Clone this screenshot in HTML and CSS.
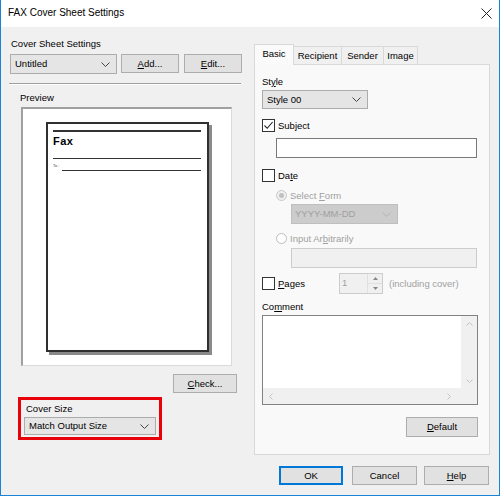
FILE: index.html
```html
<!DOCTYPE html>
<html>
<head>
<meta charset="utf-8">
<link rel="stylesheet" href="styles.css">
</head>
<body>
<div class="window">
  <div class="titlebar">
    <span class="title">FAX Cover Sheet Settings</span>
    <svg class="close" width="11" height="11" viewBox="0 0 11 11"><path d="M0.5 0.5L10.5 10.5M10.5 0.5L0.5 10.5" stroke="#222" stroke-width="1"/></svg>
  </div>
  <div class="body">
    <div class="left">
      <div class="lbl lbl-css">Cover Sheet Settings</div>
      <div class="row1">
        <div class="select sel-untitled"><span>Untitled</span><svg class="chev" width="9" height="5" viewBox="0 0 9 5"><path d="M0.5 0.5L4.5 4.5L8.5 0.5" fill="none" stroke="#444"/></svg></div>
        <div class="btn btn-add"><u>A</u>dd...</div>
        <div class="btn btn-edit"><u>E</u>dit...</div>
      </div>
      <div class="sep"></div>
      <div class="lbl lbl-preview">Preview</div>
      <div class="preview">
        <div class="page">
          <div class="pline pl1"></div>
          <div class="fax">Fax</div>
          <div class="pline pl2"></div>
          <div class="torow"><span class="to">To :</span><div class="pline pl3"></div></div>
        </div>
      </div>
      <div class="btn btn-check"><u>C</u>heck...</div>
      <div class="redbox">
        <div class="lbl lbl-cs">Cover Size</div>
        <div class="select sel-size"><span>Match Output Size</span><svg class="chev" width="9" height="5" viewBox="0 0 9 5"><path d="M0.5 0.5L4.5 4.5L8.5 0.5" fill="none" stroke="#444"/></svg></div>
      </div>
    </div>
    <div class="right">
      <div class="tabs">
        <div class="tab sel t1">Basic</div>
        <div class="tab t2">Recipient</div>
        <div class="tab t3">Sender</div>
        <div class="tab t4">Image</div>
      </div>
      <div class="panel">
        <div class="lbl lbl-style">St<u>y</u>le</div>
        <div class="select sel-style"><span>Style 00</span><svg class="chev" width="9" height="5" viewBox="0 0 9 5"><path d="M0.5 0.5L4.5 4.5L8.5 0.5" fill="none" stroke="#444"/></svg></div>
        <div class="chkrow row-subject">
          <span class="chk"><svg width="11" height="11" viewBox="0 0 11 11"><path d="M1.5 5.5L4.2 8.3L9.6 2" fill="none" stroke="#222" stroke-width="1.1"/></svg></span>
          <span>Sub<u>j</u>ect</span>
        </div>
        <div class="input in-subject"></div>
        <div class="chkrow row-date">
          <span class="chk"></span>
          <span>Da<u>t</u>e</span>
        </div>
        <div class="radrow row-form dis">
          <span class="radio on"><span class="dot"></span></span>
          <span>Select <u>F</u>orm</span>
        </div>
        <div class="select sel-date dsel"><span>YYYY-MM-DD</span><svg class="chev" width="9" height="5" viewBox="0 0 9 5"><path d="M0.5 0.5L4.5 4.5L8.5 0.5" fill="none" stroke="#b4b4b4"/></svg></div>
        <div class="radrow row-arb dis">
          <span class="radio"></span>
          <span>Input Ar<u>b</u>itrarily</span>
        </div>
        <div class="input in-arb"></div>
        <div class="pagesrow">
          <div class="chkrow row-pages">
            <span class="chk"></span>
            <span><u>P</u>ages</span>
          </div>
          <div class="spin">
            <span class="spinval">1</span>
            <span class="spinbtns">
              <span class="sb"><svg width="5" height="3" viewBox="0 0 5 3"><path d="M0 3L2.5 0L5 3Z" fill="#888"/></svg></span>
              <span class="sb"><svg width="5" height="3" viewBox="0 0 5 3"><path d="M0 0L2.5 3L5 0Z" fill="#888"/></svg></span>
            </span>
          </div>
          <span class="incl">(including cover)</span>
        </div>
        <div class="lbl lbl-comment">Co<u>m</u>ment</div>
        <div class="textarea">
          <div class="ta-main">
            <div class="ta-text"></div>
            <div class="vscroll">
              <svg width="7" height="4" viewBox="0 0 7 4"><path d="M0.5 3.5L3.5 0.5L6.5 3.5" fill="none" stroke="#c4c4c4"/></svg>
              <svg width="7" height="4" viewBox="0 0 7 4"><path d="M0.5 0.5L3.5 3.5L6.5 0.5" fill="none" stroke="#c4c4c4"/></svg>
            </div>
          </div>
          <div class="hscroll">
            <svg width="4" height="7" viewBox="0 0 4 7"><path d="M3.5 0.5L0.5 3.5L3.5 6.5" fill="none" stroke="#c4c4c4"/></svg>
            <svg width="4" height="7" viewBox="0 0 4 7"><path d="M0.5 0.5L3.5 3.5L0.5 6.5" fill="none" stroke="#c4c4c4"/></svg>
            <span class="corner"></span>
          </div>
        </div>
        <div class="defrow"><div class="btn btn-default"><u>D</u>efault</div></div>
      </div>
      <div class="bottom">
        <div class="btn btn-ok">OK</div>
        <div class="btn btn-cancel">Cancel</div>
        <div class="btn btn-help"><u>H</u>elp</div>
      </div>
    </div>
  </div>
</div>
</body>
</html>
```
FILE: styles.css
```css
* { box-sizing: border-box; }
html, body { margin: 0; padding: 0; }
body {
  font-family: "Liberation Sans", Arial, sans-serif;
  font-size: 9.5px;
  line-height: 12px;
  color: #000;
  background: #f0f0f0;
}
u { text-decoration: underline; text-underline-offset: 1px; }
.window {
  width: 500px;
  height: 496px;
  border: 1px solid #1883d7;
  border-top: none;
  background: #f0f0f0;
  display: flex;
  flex-direction: column;
}
.titlebar {
  height: 27px;
  background: #fff;
  display: flex;
  align-items: center;
  justify-content: space-between;
  padding: 0 8px 1px 7px;
}
.title { font-size: 10px; color: #000; }
.close { margin-right: -1px; }
.body { flex: 1; display: flex; }
.left { width: 252px; padding: 11px 0 0 9px; display: flex; flex-direction: column; }
.right { flex: 1; padding: 17px 0 0 1px; display: flex; flex-direction: column; }
.lbl { line-height: 12px; height: 12px; flex: none; }
.lbl-css { padding-left: 1px; }
.row1 { display: flex; margin-top: 4px; }
.select {
  display: flex;
  align-items: center;
  justify-content: space-between;
  background: #e5e5e5;
  border: 1px solid #acacac;
  padding: 0 6px 0 4px;
  height: 20px;
  flex: none;
}
.sel-untitled { width: 107px; }
.btn {
  display: flex;
  align-items: center;
  justify-content: center;
  background: #e1e1e1;
  border: 1px solid #adadad;
  height: 19px;
  flex: none;
}
.btn-add { width: 58px; margin-left: 4px; }
.btn-edit { width: 58px; margin-left: 5px; }
.sep {
  margin-top: 9px;
  margin-left: -1px;
  width: 232px;
  border-top: 1px solid #a0a0a0;
  border-bottom: 1px solid #fff;
}
.lbl-preview { margin-top: 7px; padding-left: 10px; }
.preview {
  margin-top: 3px;
  margin-left: 11px;
  width: 211px;
  height: 259px;
  flex: none;
  background: #fff;
  border-top: 2px solid #a0a0a0;
  border-left: 2px solid #a0a0a0;
  border-right: 1px solid #dadada;
  border-bottom: 1px solid #dadada;
  padding: 13px 0 0 23px;
}
.page {
  width: 163px;
  height: 230px;
  border: 2px solid #303030;
  background: #fff;
  box-shadow: 3px 3px 0 #8a8a8a;
  padding: 6px 6px 0 5px;
}
.pline { height: 1.5px; background: #333; }
.fax { font-weight: bold; font-size: 11px; line-height: 13px; margin-top: 3px; letter-spacing: 0.5px; }
.pl2 { margin-top: 10px; }
.torow { display: flex; align-items: flex-end; margin-top: 4px; }
.to { font-size: 4px; line-height: 5px; color: #444; width: 9px; }
.pl3 { flex: 1; margin-bottom: -3px; }
.btn-check { width: 64px; height: 19px; margin-top: 8px; margin-left: 163px; }
.redbox {
  margin-top: 4px;
  margin-left: 8px;
  width: 144px;
  height: 43px;
  flex: none;
  border: 3px solid #e8000b;
  padding: 3px 0 0 5px;
}
.sel-size { width: 132px; height: 18px; margin-top: 2px; margin-left: -2px; padding-left: 4px; }
.tabs { display: flex; align-items: flex-end; height: 20px; position: relative; z-index: 1; flex: none; }
.tab {
  height: 18px;
  border: 1px solid #d9d9d9;
  border-bottom: none;
  background: #f0f0f0;
  display: flex;
  align-items: center;
  justify-content: center;
  margin-left: -1px;
}
.tab.sel { height: 21px; background: #fafafa; padding-bottom: 2px; margin-left: 0; margin-bottom: -1px; }
.t1 { width: 40px; }
.t2 { width: 49px; }
.t3 { width: 43px; }
.t4 { width: 35px; }
.panel {
  width: 236px;
  height: 391px;
  flex: none;
  background: #f9f9f9;
  border: 1px solid #d9d9d9;
  padding: 8px 0 0 7px;
  display: flex;
  flex-direction: column;
}
.lbl-style { margin-top: 3px; }
.sel-style { width: 106px; height: 19px; margin-top: 2px; }
.chkrow { display: flex; align-items: center; height: 13px; flex: none; }
.chk {
  width: 13px;
  height: 13px;
  border: 1px solid #333;
  background: #fff;
  display: inline-flex;
  align-items: center;
  justify-content: center;
  margin-right: 3px;
  flex: none;
}
.row-subject { margin-top: 10px; }
.input { background: #fff; border: 1px solid #7a7a7a; height: 21px; flex: none; }
.in-subject { width: 201px; height: 20px; margin-top: 6px; margin-left: 14px; }
.row-date { margin-top: 11px; }
.radrow { display: flex; align-items: center; height: 13px; margin-left: 14px; flex: none; }
.dis { color: #a0a0a0; }
.radio {
  width: 11px;
  height: 11px;
  border-radius: 50%;
  border: 1px solid #bcbcbc;
  background: #fff;
  margin-right: 3px;
  display: inline-flex;
  align-items: center;
  justify-content: center;
  flex: none;
}
.radio.on { background: #f0f0f0; border-color: #c8c8c8; }
.dot { width: 5px; height: 5px; border-radius: 50%; background: #c0c0c0; }
.row-form { margin-top: 7px; }
.dsel { background: #cccccc; border-color: #bfbfbf; color: #a0a0a0; }
.sel-date { width: 107px; height: 20px; margin-top: 2px; margin-left: 29px; padding-left: 3px; }
.row-arb { margin-top: 8px; }
.in-arb { width: 186px; height: 20px; margin-top: 3px; margin-left: 29px; background: #f0f0f0; border-color: #cccccc; }
.pagesrow { display: flex; align-items: center; margin-top: 5px; height: 21px; flex: none; }
.row-pages { width: 77px; }
.spin {
  width: 44px;
  height: 21px;
  border: 1px solid #cccccc;
  background: #f0f0f0;
  display: flex;
  color: #a0a0a0;
  flex: none;
}
.spinval { flex: 1; padding: 3px 0 0 2px; }
.spinbtns { width: 15px; display: flex; flex-direction: column; border-left: 1px solid #e0e0e0; }
.sb { flex: 1; display: flex; align-items: center; justify-content: center; }
.sb:first-child { border-bottom: 1px solid #e0e0e0; }
.incl { color: #a0a0a0; margin-left: 6px; }
.lbl-comment { margin-top: 7px; }
.textarea {
  width: 216px;
  height: 90px;
  flex: none;
  margin-top: 2px;
  border: 1px solid #828282;
  background: #fff;
  display: flex;
  flex-direction: column;
}
.ta-main { flex: 1; display: flex; }
.ta-text { flex: 1; }
.vscroll {
  width: 16px;
  background: #f0f0f0;
  display: flex;
  flex-direction: column;
  justify-content: space-between;
  align-items: center;
  padding: 6px 0 5px 0;
}
.hscroll {
  height: 16px;
  background: #f0f0f0;
  display: flex;
  align-items: center;
  padding-left: 6px;
}
.hscroll svg:nth-child(2) { margin-left: auto; margin-right: 10px; }
.corner { width: 16px; height: 16px; background: #f0f0f0; }
.defrow { display: flex; margin-top: 12px; width: 216px; justify-content: flex-end; flex: none; }
.btn-default { width: 72px; height: 20px; }
.bottom { display: flex; margin-top: 11px; padding-left: 25px; }
.btn-ok { width: 64px; border: 1px solid #0078d7; box-shadow: inset 0 0 0 1px #0078d7; }
.btn-cancel { width: 65px; margin-left: 9px; }
.btn-help { width: 65px; margin-left: 7px; }
```
